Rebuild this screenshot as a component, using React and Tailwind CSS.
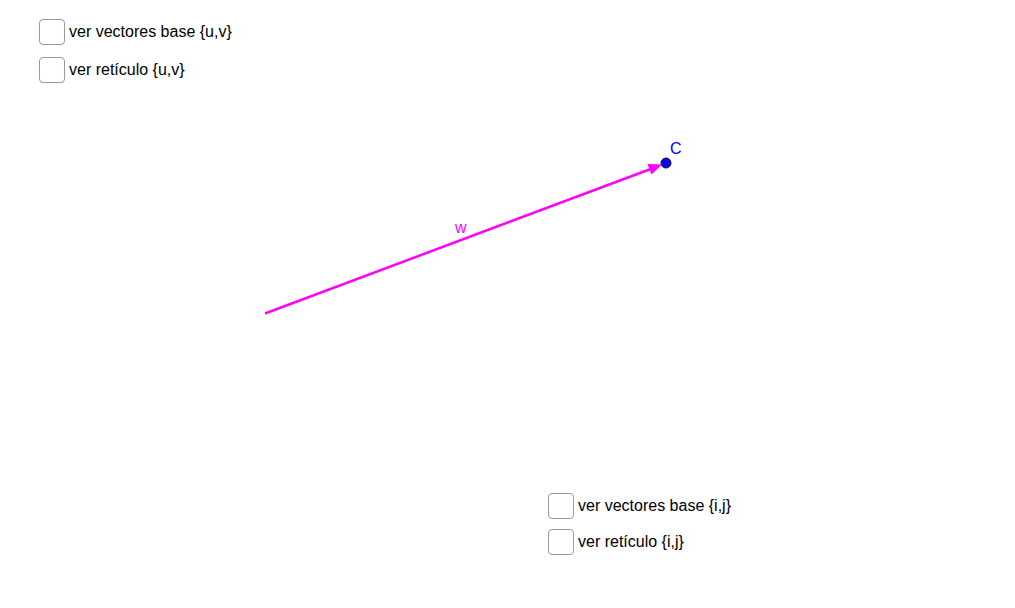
import React from 'react'

const labelClass = 'text-[16px] leading-none text-black'

function Check({ label }) {
  return (
    <label className="flex items-center gap-[4px] h-[26px]">
      <span className="block w-[26px] h-[26px] rounded-[4px] border border-[#9a9a9a] bg-white" />
      <span className={labelClass}>{label}</span>
    </label>
  )
}

function Graph() {
  return (
    <svg className="absolute inset-0" width="1015" height="608" viewBox="0 0 1015 608">
      <line x1="265" y1="313.5" x2="652" y2="168.5" stroke="#ff00ff" strokeWidth="2.5" />
      <polygon points="662,164.5 647.5,164 651.5,174.5" fill="#ff00ff" />
      <circle cx="666" cy="163" r="5" fill="#0000ff" stroke="#111" strokeWidth="1" />
      <text x="670" y="154" fill="#0000ff" fontSize="16" fontFamily="Liberation Sans, Arial, sans-serif">C</text>
      <text x="455" y="233" fill="#ff00ff" fontSize="16" fontFamily="Liberation Sans, Arial, sans-serif">w</text>
    </svg>
  )
}

export default function App() {
  return (
    <div className="relative w-[1015px] h-[608px] bg-white overflow-hidden font-['Liberation_Sans',Arial,sans-serif]">
      <Graph />
      <div className="absolute left-[39px] top-[19px] flex flex-col gap-[12px]">
        <Check label="ver vectores base {u,v}" />
        <Check label="ver retículo {u,v}" />
      </div>
      <div className="absolute left-[548px] top-[493px] flex flex-col gap-[10px]">
        <Check label="ver vectores base {i,j}" />
        <Check label="ver retículo {i,j}" />
      </div>
    </div>
  )
}
